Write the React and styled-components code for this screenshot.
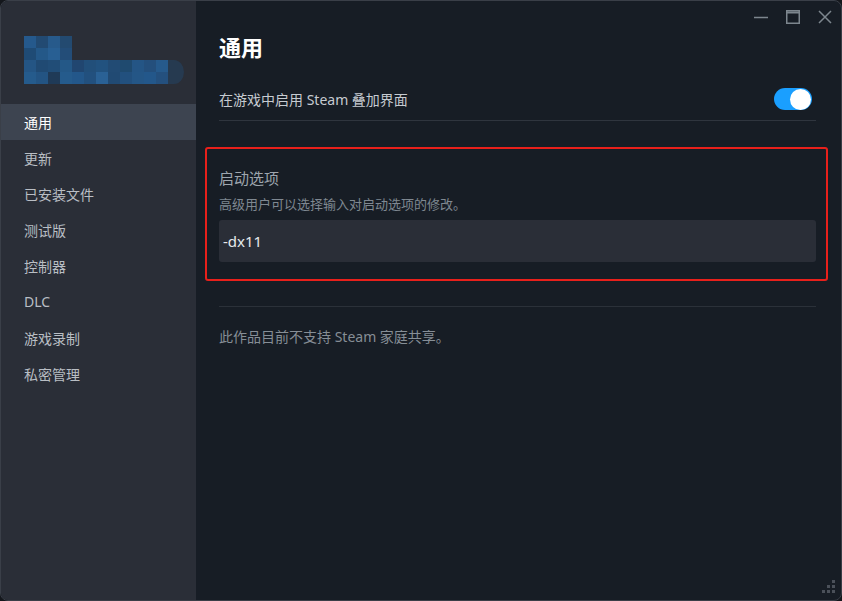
import React from "react";
import styled, { createGlobalStyle } from "styled-components";

const Global = createGlobalStyle`
  html, body { margin: 0; padding: 0; background: #14171c; }
  body { font-family: "Noto Sans", "Noto Sans CJK SC", sans-serif; }
  * { box-sizing: border-box; }
`;

const Window = styled.div`
  width: 842px;
  height: 601px;
  display: flex;
  border: 1px solid #3a3f48;
  border-radius: 8px;
  overflow: hidden;
  background: #171d25;
`;

const Sidebar = styled.aside`
  width: 195px;
  flex: none;
  background: #2a2e37;
  display: flex;
  flex-direction: column;
`;

const LogoArea = styled.div`
  height: 103px;
  padding: 35px 0 0 23px;
`;

const Menu = styled.nav`
  display: flex;
  flex-direction: column;
`;

const MenuItem = styled.div`
  height: 36px;
  display: flex;
  align-items: center;
  padding-left: 23px;
  padding-bottom: 1px;
  font-size: 14px;
  font-family: "Noto Sans", "Noto Sans CJK SC", sans-serif;
  color: ${(p) => (p.$active ? "#ffffff" : "#b9bec4")};
  background: ${(p) => (p.$active ? "#3d4450" : "transparent")};
`;

const Main = styled.main`
  flex: 1;
  display: flex;
  flex-direction: column;
  position: relative;
`;

const TitleBar = styled.div`
  height: 29px;
  display: flex;
  justify-content: flex-end;
  align-items: flex-start;
  gap: 18px;
  padding-right: 9px;
  padding-top: 9px;
`;

const CtrlBtn = styled.div`
  width: 14px;
  height: 14px;
  display: flex;
  align-items: center;
  justify-content: center;
`;

const Content = styled.div`
  padding: 0 25px 0 23px;
  display: flex;
  flex-direction: column;
`;

const Heading = styled.h1`
  margin: 0;
  height: 32px;
  line-height: 32px;
  font-size: 22px;
  font-weight: 700;
  color: #ffffff;
  font-family: "Noto Sans CJK SC", sans-serif;
`;

const SettingRow = styled.div`
  margin-top: 16px;
  height: 43px;
  display: flex;
  align-items: center;
  justify-content: space-between;
  border-bottom: 1px solid #2f353e;
  font-size: 14px;
  color: #c6cbd1;
`;

const Toggle = styled.div`
  width: 38px;
  height: 22px;
  margin-right: 4px;
  border-radius: 11px;
  background: #1a9fff;
  display: flex;
  align-items: center;
  justify-content: flex-end;
  padding: 1px;
`;

const Knob = styled.div`
  width: 21px;
  height: 21px;
  border-radius: 50%;
  background: #ffffff;
`;

const Highlight = styled.section`
  margin: 26px -12px 0 -14px;
  border: 2px solid #e8201b;
  border-radius: 3px;
  padding: 19px 10px 17px 12px;
  display: flex;
  flex-direction: column;
`;

const SectionTitle = styled.div`
  font-size: 15px;
  line-height: 20px;
  color: #9ea6ae;
`;

const SectionDesc = styled.div`
  margin-top: 7px;
  font-size: 13px;
  line-height: 18px;
  color: #7f8891;
`;

const Input = styled.div`
  margin-top: 7px;
  height: 42px;
  border-radius: 3px;
  background: #2a2e37;
  display: flex;
  align-items: center;
  padding-left: 4px;
  font-size: 15px;
  color: #e6e9ec;
  font-family: "Noto Sans", sans-serif;
`;

const Divider = styled.hr`
  margin: 25px 0 0;
  border: none;
  border-top: 1px solid #2b3139;
`;

const Note = styled.div`
  margin-top: 20px;
  font-size: 14px;
  line-height: 20px;
  color: #868e96;
`;

const Grip = styled.svg`
  position: absolute;
  right: 5px;
  bottom: 6px;
`;

const logoRows = [
  ["#25598c", "#224a72", "#275a8b", "#234a70"],
  ["#1f4b75", "#245888", "#285f93", "#234d78"],
  ["#245584", "#204a73", "#214d77", "#245887", "#214670", "#224f7a", "#22527f", "#224b74", "#1f4a6f", "#245585", "#244f7c", "#265a8c"],
  ["#255b8c", "#235483", "#1f3a57", "#255b8c", "#23578a", "#22507e", "#2a6195", "#214a73", "#22507e", "#245686", "#23578a", "#24507e"],
];

function Logo() {
  return (
    <svg width="172" height="48" viewBox="0 0 172 48">
      {logoRows.map((row, r) =>
        row.map((c, i) => (
          <rect key={r + "-" + i} x={i * 12} y={r * 12} width="12" height="12" fill={c} />
        ))
      )}
      <path d="M144 24 h6 a10 12 0 0 1 0 24 h-6 z" fill="#263a50" />
    </svg>
  );
}

const items = ["通用", "更新", "已安装文件", "测试版", "控制器", "DLC", "游戏录制", "私密管理"];

export default function App() {
  return (
    <>
      <Global />
      <Window>
        <Sidebar>
          <LogoArea>
            <Logo />
          </LogoArea>
          <Menu>
            {items.map((t, i) => (
              <MenuItem key={t} $active={i === 0}>{t}</MenuItem>
            ))}
          </Menu>
        </Sidebar>
        <Main>
          <TitleBar>
            <CtrlBtn>
              <svg width="14" height="14" viewBox="0 0 14 14">
                <line x1="0" y1="7.5" x2="14" y2="7.5" stroke="#7d868e" strokeWidth="1.5" />
              </svg>
            </CtrlBtn>
            <CtrlBtn>
              <svg width="14" height="14" viewBox="0 0 14 14">
                <rect x="0.75" y="0.75" width="12.5" height="12.5" fill="none" stroke="#7d868e" strokeWidth="1.5" />
                <line x1="0" y1="2.5" x2="14" y2="2.5" stroke="#7d868e" strokeWidth="2" />
              </svg>
            </CtrlBtn>
            <CtrlBtn>
              <svg width="14" height="14" viewBox="0 0 14 14">
                <path d="M1 1 L13 13 M13 1 L1 13" stroke="#7d868e" strokeWidth="1.5" />
              </svg>
            </CtrlBtn>
          </TitleBar>
          <Content>
            <Heading>通用</Heading>
            <SettingRow>
              <span>在游戏中启用 Steam 叠加界面</span>
              <Toggle>
                <Knob />
              </Toggle>
            </SettingRow>
            <Highlight>
              <SectionTitle>启动选项</SectionTitle>
              <SectionDesc>高级用户可以选择输入对启动选项的修改。</SectionDesc>
              <Input>-dx11</Input>
            </Highlight>
            <Divider />
            <Note>此作品目前不支持 Steam 家庭共享。</Note>
          </Content>
          <Grip width="14" height="14" viewBox="0 0 14 14">
            <rect x="10" y="0" width="3" height="3" fill="#4a5059" />
            <rect x="5" y="5" width="3" height="3" fill="#4a5059" />
            <rect x="10" y="5" width="3" height="3" fill="#4a5059" />
            <rect x="0" y="10" width="3" height="3" fill="#4a5059" />
            <rect x="5" y="10" width="3" height="3" fill="#4a5059" />
            <rect x="10" y="10" width="3" height="3" fill="#4a5059" />
          </Grip>
        </Main>
      </Window>
    </>
  );
}
